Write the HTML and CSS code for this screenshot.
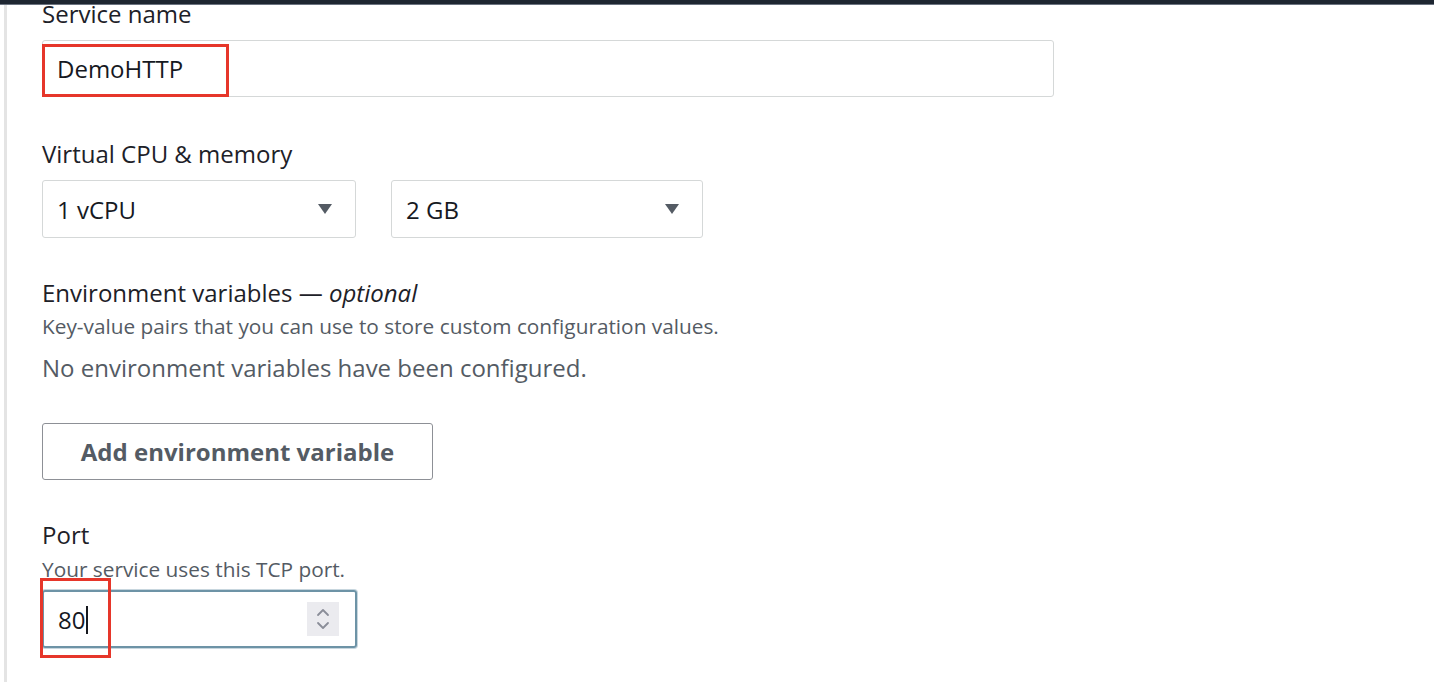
FILE: index.html
```html
<!DOCTYPE html>
<html>
<head>
<meta charset="utf-8">
<link rel="stylesheet" href="styles.css">
</head>
<body>
<div class="topbar"></div>
<div class="page">
  <div class="content">
    <div class="field field-name">
      <div class="label">Service name</div>
      <div class="input wide">
        <span class="value">DemoHTTP</span>
        <span class="mark mark-name"></span>
      </div>
    </div>

    <div class="field field-cpu">
      <div class="label">Virtual CPU &amp; memory</div>
      <div class="selects">
        <div class="select s1">
          <span class="value">1 vCPU</span>
          <svg class="caret" width="16" height="12" viewBox="0 0 16 12"><path d="M1 1 H15 L8 11 Z" fill="#545b64"/></svg>
        </div>
        <div class="select s2">
          <span class="value">2 GB</span>
          <svg class="caret" width="16" height="12" viewBox="0 0 16 12"><path d="M1 1 H15 L8 11 Z" fill="#545b64"/></svg>
        </div>
      </div>
    </div>

    <div class="field field-env">
      <div class="label">Environment variables — <i>optional</i></div>
      <div class="desc">Key-value pairs that you can use to store custom configuration values.</div>
      <div class="empty">No environment variables have been configured.</div>
      <button class="btn">Add environment variable</button>
    </div>

    <div class="field field-port">
      <div class="label">Port</div>
      <div class="desc">Your service uses this TCP port.</div>
      <div class="input port">
        <span class="value">80<span class="cursor"></span></span>
        <span class="spin">
          <svg width="18" height="26" viewBox="0 0 18 26"><path d="M4 9 L9 4 L14 9 M4 17 L9 22 L14 17" fill="none" stroke="#8a8d98" stroke-width="1.8" stroke-linecap="round" stroke-linejoin="round"/></svg>
        </span>
        <span class="mark mark-port"></span>
      </div>
    </div>
  </div>
</div>
</body>
</html>
```

FILE: styles.css
```css
* { box-sizing: border-box; }
html, body { margin: 0; padding: 0; background: #fff; }
body {
  font-family: "Open Sans", "Noto Sans", sans-serif;
  color: #16191f;
  width: 1434px;
  height: 682px;
  overflow: hidden;
  position: relative;
}
.topbar {
  position: absolute;
  top: 0;
  left: 0;
  right: 0;
  z-index: 2;
  height: 5px;
  background: #1e2631;
  border-bottom: 1px solid #6b7380;
}
.page {
  margin-left: 4px;
  border-left: 3px solid #e4e4e4;
  height: 682px;
  padding-top: 5px;
}
.content {
  padding-left: 35px;
  display: flex;
  flex-direction: column;
}
.label {
  font-size: 24px;
  line-height: 28px;
  font-weight: 500;
  color: #1d2128;
}
.label i { font-weight: 400; }
.field-name { margin-top: -5px; }
.field-name .label { margin-bottom: 12px; }
.input {
  position: relative;
  height: 57px;
  border: 1.5px solid #d5d8d8;
  border-radius: 3px;
  display: flex;
  align-items: center;
  padding-left: 14px;
  font-size: 24px;
}
.wide { width: 1012px; }
.value { color: #16191f; }
.mark {
  position: absolute;
  border: 3.5px solid #e6362a;
}
.mark-name { left: -1px; top: 3px; width: 187px; height: 53px; }
.field-cpu { margin-top: 43px; }
.field-cpu .label { margin-bottom: 12px; }
.selects { display: flex; gap: 35px; }
.select {
  height: 58px;
  border: 1.5px solid #d5d8d8;
  border-radius: 3px;
  display: flex;
  align-items: center;
  justify-content: space-between;
  padding: 0 22px 0 14px;
  font-size: 24px;
}
.s1 { width: 314px; }
.s2 { width: 312px; }
.field-env { margin-top: 41px; }
.desc {
  font-size: 20.8px;
  line-height: 24px;
  color: #545b64;
  margin-top: 7px;
}
.empty {
  font-size: 24px;
  line-height: 28px;
  color: #545b64;
  margin-top: 16px;
}
.btn {
  margin-top: 41px;
  width: 391px;
  height: 57px;
  background: #fff;
  border: 1.5px solid #8d9096;
  border-radius: 3px;
  font-family: inherit;
  font-size: 24px;
  font-weight: 700;
  color: #545b64;
  padding: 0;
}
.field-port { margin-top: 41px; }
.field-port .desc { margin-top: 8px; }
.port {
  margin-top: 9px;
  width: 315px;
  height: 58px;
  border: 2px solid #6d93a6;
  box-shadow: 0 0 0 1px #c7d6de;
  justify-content: space-between;
  padding-right: 16px;
}
.cursor {
  display: inline-block;
  width: 1.5px;
  height: 28px;
  background: #16191f;
  vertical-align: -5px;
  margin-left: 1px;
}
.spin {
  width: 32px;
  height: 34px;
  background: #ebebef;
  display: flex;
  align-items: center;
  justify-content: center;
}
.mark-port { left: -4px; top: -14px; width: 71px; height: 80px; }
```
